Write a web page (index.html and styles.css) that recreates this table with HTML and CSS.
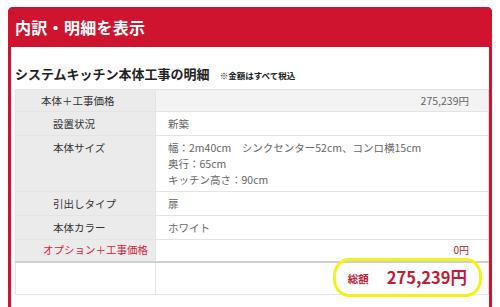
FILE: index.html
```html
<!DOCTYPE html>
<html lang="ja">
<head>
<meta charset="utf-8">
<link rel="stylesheet" href="styles.css">
</head>
<body>
<section class="panel">
  <h2 class="panel-head">内訳・明細を表示</h2>
  <div class="panel-body">
    <h3 class="title">システムキッチン本体工事の明細<span class="note">※金額はすべて税込</span></h3>
    <table class="detail">
      <colgroup><col class="col-lbl"><col></colgroup>
      <tr class="row-main">
        <th class="lbl lbl-main">本体＋工事価格</th>
        <td class="val val-right">275,239円</td>
      </tr>
      <tr>
        <th class="lbl lbl-sub">設置状況</th>
        <td class="val">新築</td>
      </tr>
      <tr>
        <th class="lbl lbl-sub">本体サイズ</th>
        <td class="val">幅：2m40cm　シンクセンター52cm、コンロ横15cm<br>奥行：65cm<br>キッチン高さ：90cm</td>
      </tr>
      <tr>
        <th class="lbl lbl-sub">引出しタイプ</th>
        <td class="val">扉</td>
      </tr>
      <tr>
        <th class="lbl lbl-sub">本体カラー</th>
        <td class="val">ホワイト</td>
      </tr>
      <tr class="row-option">
        <th class="lbl lbl-option">オプション＋工事価格</th>
        <td class="val val-right val-option">0円</td>
      </tr>
      <tr class="row-total">
        <th class="lbl-total"></th>
        <td class="val-total"><span class="total-label">総額</span><span class="total-num">275,239円</span><span class="mark"></span></td>
      </tr>
    </table>
  </div>
</section>
</body>
</html>
```
FILE: styles.css
```css
html, body {
  margin: 0;
  padding: 0;
  background: #fff;
}
body {
  font-family: "Noto Sans CJK JP", "Noto Sans", sans-serif;
  color: #333;
}
.panel {
  margin: 7px 0 0 8px;
  width: 484px;
  height: 320px;
  box-sizing: border-box;
  border: 3px solid #cf1430;
  border-top: 0;
  border-radius: 5px 5px 0 0;
}
.panel-head {
  margin: 0 -3px;
  height: 40px;
  padding-left: 7px;
  background: #cf1430;
  border-radius: 5px 5px 0 0;
  color: #fff;
  font-size: 16px;
  font-weight: bold;
  line-height: 40px;
  letter-spacing: 0.3px;
}
.panel-body {
  padding: 17px 0 0 4px;
}
.title {
  margin: 0 0 4px 0;
  font-size: 13px;
  line-height: 20px;
  font-weight: bold;
  color: #222;
}
.note {
  font-size: 8.5px;
  margin-left: 10px;
  color: #222;
}
.detail {
  width: 474px;
  table-layout: fixed;
  border-collapse: collapse;
  font-size: 10.5px;
  line-height: 16px;
  border: 1px solid #e2e2e2;
}
.col-lbl {
  width: 140px;
}
.detail th, .detail td {
  padding: 4px 0 3px 0;
  border-bottom: 1px solid #e4e4e4;
  vertical-align: top;
}
.lbl {
  background: #ebebeb;
  font-weight: normal;
  text-align: left;
  color: #333;
  border-right: 1px solid #e4e4e4;
}
.detail .lbl-main {
  padding: 3px 0 2px 25px;
}
.detail .row-main .val {
  background: #f3f3f3;
  padding-top: 3px;
  padding-bottom: 2px;
}
.detail .lbl-sub {
  padding-left: 37px;
}
.detail .lbl-option {
  text-align: right;
  padding-right: 7px;
  color: #d2233f;
}
.detail .val {
  padding-left: 12px;
  color: #666;
}
.detail .val-right {
  text-align: right;
  padding-right: 19px;
}
.val-option {
  font-size: 10px;
}
.detail .val-option {
  color: #b01a30;
}
.detail .row-option th, .detail .row-option td {
  border-bottom: 2px solid #cfcfcf;
  padding-top: 2px;
  padding-bottom: 3px;
}
.lbl-total {
  border-right: 1px solid #e4e4e4;
  background: #fff;
}
.detail .val-total {
  position: relative;
  text-align: right;
  padding: 4px 21px 4px 0;
  height: 20px;
  line-height: 20px;
}
.total-label {
  font-size: 10.5px;
  font-weight: bold;
  color: #c21c3a;
  margin-right: 18px;
  vertical-align: 1px;
}
.total-num {
  font-size: 16.5px;
  font-weight: bold;
  color: #c21c3a;
}
.mark {
  position: absolute;
  right: 6px;
  top: -5px;
  width: 149px;
  height: 39px;
  box-sizing: border-box;
  border: 3px solid #f3f31c;
  border-radius: 16px / 18px;
}
```
